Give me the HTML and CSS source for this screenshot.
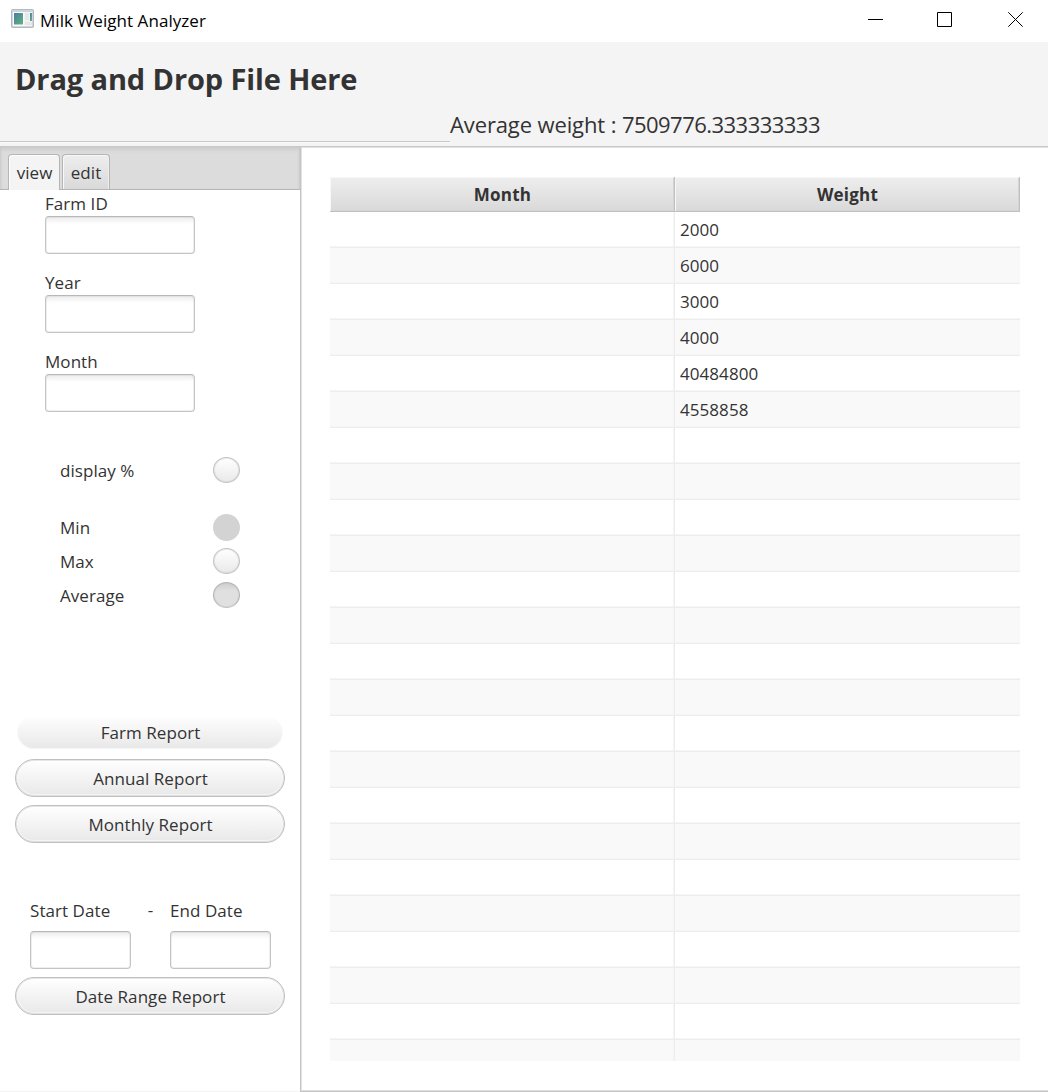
FILE: index.html
```
<!DOCTYPE html>
<html lang="en">
<head>
<meta charset="utf-8">
<title>Milk Weight Analyzer</title>
<link rel="stylesheet" href="styles.css">
</head>
<body>
<div class="window">
  <div class="titlebar">
    <svg class="app-icon" width="23" height="19" viewBox="0 0 23 19">
      <defs><linearGradient id="pane" x1="0" y1="0" x2="1" y2="1"><stop offset="0" stop-color="#4779a8"/><stop offset="1" stop-color="#5fb878"/></linearGradient></defs>
      <rect x=".75" y=".75" width="21.5" height="17.5" rx="1" fill="#f2f3f4" stroke="#b3bac1" stroke-width="1.5"/>
      <rect x="1" y="1" width="21" height="2" fill="#ccd4dc"/>
      <rect x="2.5" y="3.5" width="10" height="12.5" fill="url(#pane)" stroke="#fff"/>
      <rect x="14" y="4" width="4" height="7" fill="#e7e7e7"/>
      <rect x="19" y="4" width="2" height="8" fill="url(#pane)"/>
      <rect x="14" y="13" width="7" height="3" fill="#e7e7e7"/>
    </svg>
    <span class="title">Milk Weight Analyzer</span>
    <svg class="controls" width="156" height="15" viewBox="0 0 156 15" fill="none" stroke="#000">
      <path d="M0 7.5H15M69.5.5H83.5V14.5H69.5ZM140.3.3L154.7 14.7M154.7.3L140.3 14.7"/>
    </svg>
  </div>
  <header class="header">
    <div class="drop"><h1>Drag and Drop File Here</h1></div>
    <div class="average">Average weight : <span class="value">7509776.333333333</span></div>
  </header>
  <div class="main">
    <aside class="sidebar">
      <nav class="tabs"><div class="tab active">view</div><div class="tab">edit</div></nav>
      <div class="fields">
        <label>Farm ID</label><input type="text">
        <label>Year</label><input type="text">
        <label>Month</label><input type="text">
      </div>
      <div class="options">
        <div class="option display"><span>display %</span><i class="toggle"></i></div>
        <div class="option"><span>Min</span><i class="toggle disabled"></i></div>
        <div class="option"><span>Max</span><i class="toggle"></i></div>
        <div class="option"><span>Average</span><i class="toggle on"></i></div>
      </div>
      <div class="reports">
        <div class="button flat">Farm Report</div>
        <div class="button">Annual Report</div>
        <div class="button">Monthly Report</div>
      </div>
      <div class="range">
        <div class="date"><label>Start Date</label><input type="text"></div>
        <span class="dash">-</span>
        <div class="date"><label>End Date</label><input type="text"></div>
      </div>
      <div class="button range-button">Date Range Report</div>
    </aside>
    <section class="content">
      <div class="table">
        <div class="thead"><div>Month</div><div>Weight</div></div>
        <div class="row"><div></div><div>2000</div></div>
        <div class="row"><div></div><div>6000</div></div>
        <div class="row"><div></div><div>3000</div></div>
        <div class="row"><div></div><div>4000</div></div>
        <div class="row"><div></div><div>40484800</div></div>
        <div class="row"><div></div><div>4558858</div></div>
        <div class="row"><div></div><div></div></div>
        <div class="row"><div></div><div></div></div>
        <div class="row"><div></div><div></div></div>
        <div class="row"><div></div><div></div></div>
        <div class="row"><div></div><div></div></div>
        <div class="row"><div></div><div></div></div>
        <div class="row"><div></div><div></div></div>
        <div class="row"><div></div><div></div></div>
        <div class="row"><div></div><div></div></div>
        <div class="row"><div></div><div></div></div>
        <div class="row"><div></div><div></div></div>
        <div class="row"><div></div><div></div></div>
        <div class="row"><div></div><div></div></div>
        <div class="row"><div></div><div></div></div>
        <div class="row"><div></div><div></div></div>
        <div class="row"><div></div><div></div></div>
        <div class="row"><div></div><div></div></div>
        <div class="row"><div></div><div></div></div>
      </div>
    </section>
  </div>
</div>
</body>
</html>
```
FILE: styles.css
```
* { box-sizing: border-box; }
body { margin: 0; font: 17px/24px "Open Sans", "Noto Sans", sans-serif; color: #333; letter-spacing: 0.06px; }
.window { width: 1048px; height: 1092px; display: flex; flex-direction: column; background: #fff; overflow: hidden; }
.titlebar { height: 42px; flex: none; display: flex; align-items: flex-start; padding-left: 11px; color: #000; }
.app-icon { margin-top: 9px; }
.title { margin: 9px 0 0 6px; white-space: nowrap; }
.controls { margin: 12px 24px 0 auto; }
.header { height: 104px; flex: none; display: flex; background: #f4f4f4; }
.drop { width: 450px; height: 100px; border-bottom: 1px solid #c8c8c8; box-shadow: 0 1px #fafafa; padding: 17px 0 0 15px; }
h1 { margin: 0; font-size: 29px; line-height: 40px; font-weight: 700; white-space: nowrap; letter-spacing: -0.11px; }
.average { padding-top: 66px; font-size: 22px; line-height: 32px; white-space: nowrap; letter-spacing: -0.12px; }
.value { letter-spacing: -0.53px; }
.main { flex: 1; display: flex; min-height: 0; }
.sidebar { width: 300px; flex: none; border-top: 1px solid #c8c8c8; border-bottom: 1px solid #f4f4f4; }
.tabs { height: 43px; display: flex; gap: 2px; padding: 7px 8px 0; background: #dcdcdc; border-bottom: 1px solid #b5b5b5; box-shadow: inset 0 3px 4px -1px #c8c8c8, inset 2px 0 2px -1px #ccc, inset -2px 0 2px -1px #ccc; }
.tab { width: 48px; height: 35px; border: 1px solid #b5b5b5; border-bottom: 0; border-radius: 4px 4px 0 0; background: linear-gradient(#eee, #d9d9d9); box-shadow: inset 1px 1px #f8f8f8, inset -1px 0 #eee; text-align: center; line-height: 35px; }
.tab.active { width: 52px; height: 36px; padding-left: 1px; background: #f4f4f4; box-shadow: inset 1px 1px #fff; }
input { display: block; height: 38px; width: 150px; border: 1px solid #c4c4c4; outline: 0; border-top-color: #b8b8b8; border-radius: 4px; background: linear-gradient(#ececec, #fff 7px); box-shadow: inset 0 0 0 1px rgba(190,190,190,.25); padding: 0; margin: 0; }
label { display: block; height: 24px; white-space: nowrap; }
.fields { padding: 2px 0 0 45px; }
.fields input { margin-bottom: 17px; }
.options { padding: 24px 60px 0; }
.option { height: 34px; display: flex; justify-content: space-between; align-items: center; }
.option span { padding-top: 2px; }
.option.display { margin-bottom: 23px; }
.toggle { width: 27px; height: 26px; margin-top: -1px; border: 1.5px solid #c4c4c4; border-radius: 50%; background: linear-gradient(#fff, #e9e9e9); box-shadow: inset 0 0 0 1px rgba(190,190,190,.3); }
.toggle.disabled { height: 27px; margin-top: 1px; border: 0; background: #d3d3d3; box-shadow: none; }
.toggle.on { border-color: #b4b4b4; border-bottom-color: #c2c2c2; background: linear-gradient(#cecece, #e0e0e0 8px); }
.reports { padding: 101px 0 0 15px; display: flex; flex-direction: column; gap: 8px; }
.button { width: 270px; height: 38px; padding: 2px 0 0 1px; border: 1px solid #c0c0c0; border-radius: 19px; background: linear-gradient(#fff, #e8e8e8); display: flex; align-items: center; justify-content: center; box-shadow: inset 0 0 0 1px rgba(200,200,200,.45), inset 0 0 0 2px rgba(255,255,255,.5); }
.button.flat { border: 2px solid transparent; background-clip: padding-box; box-shadow: inset 0 0 0 1px rgba(255,255,255,.5); }
.range { display: grid; grid-template-columns: 101px 39px 101px; padding: 56px 0 0 30px; }
.date input { width: 101px; margin-top: 8px; }
.dash { text-align: center; margin-top: -1px; }
.range-button { margin: 8px 0 0 15px; }
.content { flex: 1; border-top: 1px solid #c8c8c8; border-left: 1px solid #c4c4c4; border-bottom: 1px solid #c4c4c4; padding: 30px 0 0 29px; box-shadow: inset 1px 1px #e2e2e2, inset 0 -1px #dedede; }
.table { width: 690px; height: 884px; overflow: hidden; }
.thead { display: grid; grid-template-columns: 345px 345px; height: 35px; font-weight: 700; text-align: center; letter-spacing: 0.2px; line-height: 32px; }
.thead div { height: 35px; padding: 2px 0 0 1px; background: linear-gradient(#eee, #d9d9d9); border-right: 1px solid #c0c0c0; border-bottom: 1px solid #c0c0c0; box-shadow: inset 1px 1px #f7f7f7, inset -1px -1px #d4d4d4; }
.row { display: grid; grid-template-columns: 345px 345px; height: 36px; }
.row:nth-child(odd) { background: #f9f9f9; }
.row div { border-bottom: 1px solid #ededed; box-shadow: inset 0 -1px #f5f5f5; padding-left: 5px; line-height: 35px; }
.row div:first-child { border-right: 1px solid #ededed; box-shadow: inset -1px -1px #f5f5f5; }
```
